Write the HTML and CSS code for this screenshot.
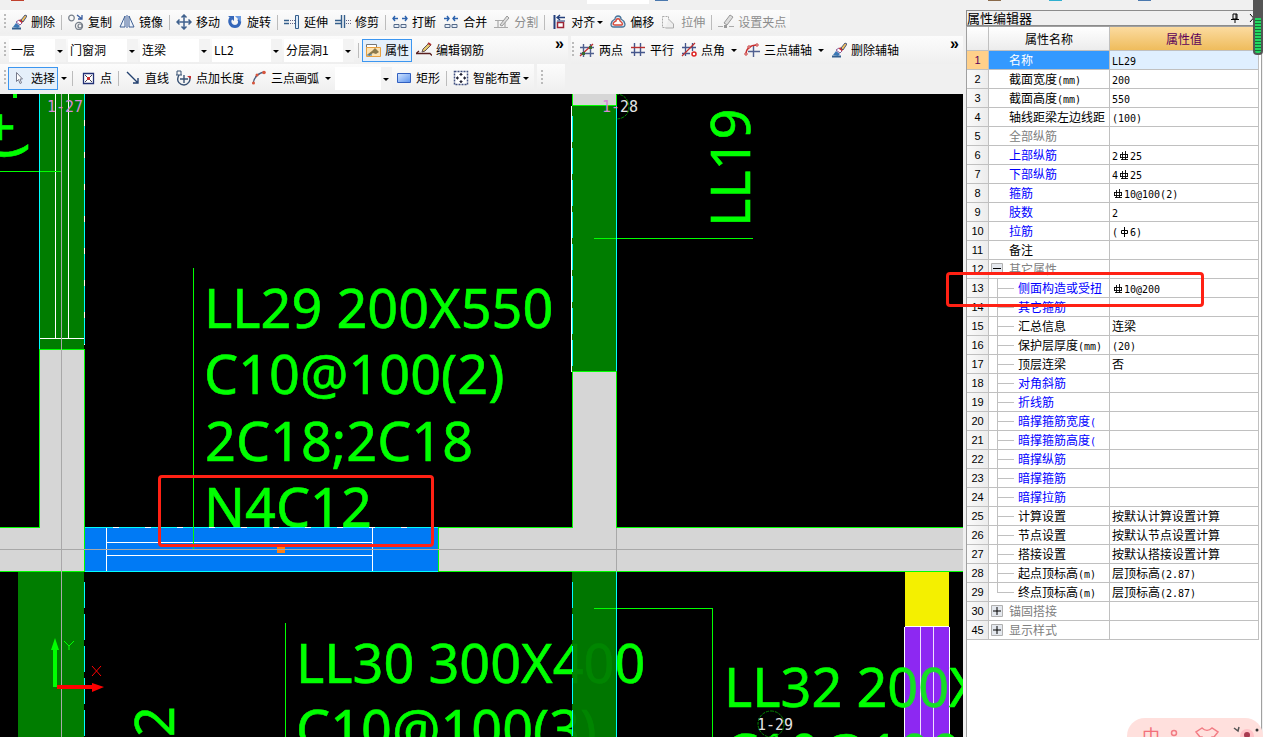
FILE: index.html
```html
<!DOCTYPE html>
<html lang="zh-CN">
<head>
<meta charset="utf-8">
<title>属性编辑器</title>
<link rel="stylesheet" href="styles.css">
</head>
<body>
<svg class="defs" width="0" height="0" aria-hidden="true">
  <defs>
    <linearGradient id="blueFill" x1="0" y1="0" x2="1" y2="1"><stop offset="0" stop-color="#d4e6ff"/><stop offset="1" stop-color="#5a92ee"/></linearGradient>
    <symbol id="brush" viewBox="0 0 16 16"><path d="M1 14.500h9" stroke="#335f8f" stroke-width="2"/><path d="M2 13l3-4 4 3-2 2z" fill="#3b78b5"/><path d="M5 8l4 3 2-2-3-3z" fill="#fff" stroke="#8a5a9a"/><path d="M8 7l3 2 1-1-3-3z" fill="#d03030"/><path d="M10 6l4-5 2 1-4 6z" fill="#f0c060" stroke="#26396c" stroke-width=".8"/></symbol>
    <symbol id="copy" viewBox="0 0 16 16"><g fill="none" stroke="#777f8a" stroke-width="1.200"><circle cx="3.500" cy="4" r="2.800"/><circle cx="11" cy="12" r="3.600"/><circle cx="12" cy="12" r="2"/></g><path d="M9 1l5 4m0-4v4h-4" fill="none" stroke="#3a5ea0" stroke-width="1.300"/></symbol>
    <symbol id="mirror" viewBox="0 0 16 16"><path d="M6 2v11H1zM10 2v11h5z" fill="#eef4fc" stroke="#3e5f93"/><path d="M8 1v13" stroke="#3a5ea0"/></symbol>
    <symbol id="move" viewBox="0 0 16 16"><path d="M8 1v14M1 8h14M5.500 3.500L8 1l2.500 2.500M5.500 12.500L8 15l2.500-2.500M3.500 5.500L1 8l2.500 2.500M12.500 5.500L15 8l-2.500 2.500" fill="none" stroke="#41628e" stroke-width="1.500"/></symbol>
    <symbol id="rotate" viewBox="0 0 16 16"><path d="M4 4C1 8 4 12.500 8 12.500S14 8 11.500 5" fill="none" stroke="#3567ba" stroke-width="3"/><path d="M8 2h6v6z" fill="#6a9ae0"/><path d="M1 2h6v5z" fill="#3567ba"/></symbol>
    <symbol id="extend" viewBox="0 0 16 16"><path d="M0 6.500h5M0 9.500h5" stroke="#355f8c" stroke-width="1.500"/><path d="M6 6.500h5M6 9.500h5" stroke="#668" stroke-dasharray="1 1"/><path d="M11.500 1.500h3v13h-3z" fill="#dceafa" stroke="#355f8c"/></symbol>
    <symbol id="trim" viewBox="0 0 16 16"><path d="M0 6.500h6M0 9.500h6" stroke="#355f8c" stroke-width="1.300"/><path d="M11 6.500h5M11 9.500h5" stroke="#668" stroke-dasharray="1 1"/><path d="M6.500 1v13M9.500 1v13" stroke="#355f8c" stroke-width="1.400"/></symbol>
    <symbol id="break" viewBox="0 0 16 16"><path d="M1 4.500h5M3 2L1 4.500 3 7M10 4.500h5M13 2l2 2.500L13 7" fill="none" stroke="#2b62ad" stroke-width="1.400"/><path d="M2 10.500h5v3H2zM9 10.500h5v3H9z" fill="#e5edf8" stroke="#536887"/></symbol>
    <symbol id="join" viewBox="0 0 16 16"><path d="M1 4.500h5M4 2l2 2.500L4 7M10 4.500h5M12 2l-2 2.500L12 7" fill="none" stroke="#2b62ad" stroke-width="1.400"/><path d="M2 10.500h5v3H2zM9 10.500h5v3H9z" fill="#e5edf8" stroke="#536887"/></symbol>
    <symbol id="split" viewBox="0 0 16 16"><path d="M1 6.500h8M0 13.500h14M4 13V6M11 13V8" stroke="#aaa" fill="none" stroke-width="1.200"/><path d="M6 11l7-9 2 2-7 8z" fill="#ddd" stroke="#999"/></symbol>
    <symbol id="align" viewBox="0 0 16 16"><path d="M3.500 1v14" stroke="#24407c" stroke-width="2"/><path d="M6.500 8.500h6v5h-6z" fill="#fff" stroke="#9e2838" stroke-width="1.500"/><path d="M6 7h8" stroke="#24407c"/><path d="M6 3.500h8M9 1L6 3.500 9 6" fill="none" stroke="#24407c" stroke-width="1.300"/></symbol>
    <symbol id="offset" viewBox="0 0 16 16"><path d="M5 5c0-4 6-4 6 0 4 2 6 8 1 8H4C-1 13 1 7 5 5z" fill="#d8e8f4" stroke="#48749a" stroke-width="1.300"/><path d="M6 7c0-3 4-3 4 0 3 2 3 4 1 4H5c-3 0-2-3 1-4z" fill="#fff" stroke="#d84a3a" stroke-width="1.400"/></symbol>
    <symbol id="stretch" viewBox="0 0 16 16"><path d="M1.500 2.500h6v11h-6z" fill="none" stroke="#aaa" stroke-dasharray="2 1"/><path d="M7.500 5l5 5v4h-8" fill="#eee" stroke="#aaa"/></symbol>
    <symbol id="grip-edit" viewBox="0 0 16 16"><path d="M0 12.500h5M11 12.500h5" stroke="#aaa"/><path d="M6 9l6-8 3 2-6 8z" fill="#ddd" stroke="#999"/><path d="M6 11h3v3H6z" fill="#999"/></symbol>
    <symbol id="props" viewBox="0 0 16 16"><path d="M1.500 2.500h10v3h-10z" fill="#fff" stroke="#777"/><path d="M1.500 5.500h14v9h-14z" fill="#fde2b0" stroke="#e8a040"/><path d="M3 12l4-3 3-3 4 4-3 2-3-1-4 3z" fill="#8c7a4c"/><path d="M2 13h5" stroke="#3578b8"/></symbol>
    <symbol id="rebar" viewBox="0 0 16 16"><path d="M3 9L0 11.500h14l2 2" stroke="#5a2020" stroke-width="1.300" fill="none"/><path d="M6 10l1-3 6-6 2 2-6 6z" fill="#e3c86e" stroke="#655"/><path d="M12 1l3 2" stroke="#b03030" stroke-width="2"/></symbol>
    <symbol id="axis2" viewBox="0 0 16 16"><path d="M4.500 2v13M11.500 2v13M1 5.500h14M1 11.500h14" stroke="#506090" stroke-width="1.400"/><path d="M1 14L14 2" stroke="#c03030" stroke-width="1.300"/><path d="M3 10h3v3H3zM10 4h3v3h-3z" fill="#3a6a30"/></symbol>
    <symbol id="parallel" viewBox="0 0 16 16"><path d="M4.500 1v13M10.500 1v13M1 10.500h14" stroke="#45568c" stroke-width="1.400"/><path d="M1 5.500h14" stroke="#b83030" stroke-width="1.400"/></symbol>
    <symbol id="angle" viewBox="0 0 16 16"><path d="M4.500 1v13M11.500 1v8M1 5.500h14M1 11.500h8" stroke="#45568c" stroke-width="1.300"/><path d="M1 14L14 1" stroke="#c03030" stroke-width="1.300"/><circle cx="13" cy="12" r="2" fill="#fff" stroke="#d22" stroke-width="1.500"/></symbol>
    <symbol id="arcaxis" viewBox="0 0 16 16"><path d="M9.500 3v12M4 9.500h12" stroke="#506090" stroke-width="1.400"/><path d="M2 12C2 7 6 3 13 3" fill="none" stroke="#c83030" stroke-width="1.400"/><g fill="#fff" stroke="#c83030"><circle cx="2" cy="12" r="1.200"/><circle cx="5" cy="5" r="1.200"/><circle cx="13" cy="3" r="1.200"/></g></symbol>
    <symbol id="cursor" viewBox="0 0 16 16"><path d="M5.500 2.500v9l2-2 1.500 4 1.500-.700-1.500-3.800h2.500z" fill="#fff" stroke="#777b8c"/></symbol>
    <symbol id="point" viewBox="0 0 16 16"><path d="M3.500 3.500h10v10h-10z" fill="#fff" stroke="#223075" stroke-width="1.300"/><path d="M5 5l7 7M12 5l-7 7" stroke="#445"/><path d="M7 7h3v3H7z" fill="#c33"/></symbol>
    <symbol id="line" viewBox="0 0 16 16"><path d="M2 2l11 11M13 8v5H8" fill="none" stroke="#23406f" stroke-width="1.400"/></symbol>
    <symbol id="ptlen" viewBox="0 0 16 16"><path d="M3 5C-1 12 5 15 8 15s8-4 5-9M8 5v8M4 9h8" fill="none" stroke="#395274" stroke-width="1.400"/><path d="M1 5V1h4v4M0 5h6" fill="none" stroke="#395274"/><path d="M11 6h4v3z" fill="#c83030"/></symbol>
    <symbol id="arc" viewBox="0 0 16 16"><path d="M2 14C3 7 7 3 14 2" fill="none" stroke="#506080" stroke-width="1.500"/><g fill="#d8553c"><circle cx="2.500" cy="13" r="1.500"/><circle cx="6" cy="5" r="1.500"/><circle cx="13" cy="2.500" r="1.800"/></g></symbol>
    <symbol id="rect" viewBox="0 0 16 16"><path d="M1.500 3.500h13v9h-13z" fill="url(#blueFill)" stroke="#315fc0"/></symbol>
    <symbol id="smart" viewBox="0 0 16 16"><path d="M1.500 1.500h13v13h-13z" fill="#fff" stroke="#405080" stroke-dasharray="2 1" stroke-width="1.500"/><path d="M8 3v10M3 8h10" stroke="#223" stroke-dasharray="3 4"/><path d="M6 5l2-2 2 2zM6 11l2 2 2-2zM5 6L3 8l2 2zM11 6l2 2-2 2z" fill="#223"/></symbol>
    <symbol id="rebar3" viewBox="0 0 12 10"><path d="M4.500 1v8M7.500 0v9M2 3.500h8M2 6.500h8M3 8.500h7M2.500 3v4M9.500 3v4" fill="none" stroke="currentColor" stroke-width=".9"/></symbol>
    <symbol id="rebar1" viewBox="0 0 12 10"><path d="M6.500 0v10M3.500 3.500h6v3h-6z" fill="none" stroke="currentColor"/></symbol>
    <symbol id="plus" viewBox="0 0 12 12"><path d="M.5.5h11v11H.5z" fill="#e4e8ee" stroke="#b0b0b0"/><path d="M2 6h8M6 2v8" stroke="#000"/></symbol>
    <symbol id="minus" viewBox="0 0 12 12"><path d="M.5.5h11v11H.5z" fill="#e4e8ee" stroke="#b0b0b0"/><path d="M2 5.500h8" stroke="#000"/></symbol>
  </defs>
</svg>

<div class="app">
  <div class="strip"><i class="bit red"></i><i class="bit box"></i><i class="bit blue"></i><i class="bit brown"></i><i class="bit cyan"></i><i class="bit blue"></i></div>
  <main class="work">
    <div class="bars">
      <div class="bar bar-edit" role="toolbar">
        <i class="grip"></i>
        <button><svg><use href="#brush"/></svg>删除</button><i class="sep"></i>
        <button><svg><use href="#copy"/></svg>复制</button>
        <button><svg><use href="#mirror"/></svg>镜像</button><i class="sep"></i>
        <button><svg><use href="#move"/></svg>移动</button>
        <button><svg><use href="#rotate"/></svg>旋转</button><i class="sep"></i>
        <button><svg><use href="#extend"/></svg>延伸</button>
        <button><svg><use href="#trim"/></svg>修剪</button><i class="sep"></i>
        <button><svg><use href="#break"/></svg>打断</button>
        <button><svg><use href="#join"/></svg>合并</button>
        <button disabled><svg><use href="#split"/></svg>分割</button><i class="sep"></i>
        <button><svg><use href="#align"/></svg>对齐<i class="caret tight"></i></button>
        <button><svg><use href="#offset"/></svg>偏移</button>
        <button disabled><svg><use href="#stretch"/></svg>拉伸</button><i class="sep"></i>
        <button disabled><svg><use href="#grip-edit"/></svg>设置夹点</button>
      </div>
      <div class="row">
        <div class="bar bar-member" role="toolbar">
          <i class="grip"></i>
          <div class="combos">
            <label class="combo short"><select aria-label="楼层"><option>一层</option></select></label>
            <label class="combo"><select aria-label="构件类别"><option>门窗洞</option></select></label>
            <label class="combo"><select aria-label="构件类型"><option>连梁</option></select></label>
            <label class="combo"><select aria-label="构件"><option>LL2</option></select></label>
            <label class="combo"><select aria-label="分层"><option>分层洞1</option></select></label>
          </div>
          <i class="sep"></i>
          <button class="on"><svg><use href="#props"/></svg>属性</button>
          <button><svg><use href="#rebar"/></svg>编辑钢筋</button>
          <span class="more">»</span>
        </div>
        <div class="bar bar-axis" role="toolbar">
          <i class="grip"></i>
          <button><svg><use href="#axis2"/></svg>两点</button>
          <button><svg><use href="#parallel"/></svg>平行</button>
          <button><svg><use href="#angle"/></svg>点角<i class="caret"></i></button>
          <button><svg><use href="#arcaxis"/></svg>三点辅轴<i class="caret"></i></button>
          <button><svg><use href="#brush"/></svg>删除辅轴</button>
          <span class="more">»</span>
        </div>
      </div>
      <div class="row">
        <div class="bar bar-draw" role="toolbar">
          <i class="grip"></i>
          <button class="on"><svg><use href="#cursor"/></svg>选择</button><i class="caret tight"></i><i class="sep wide"></i>
          <button><svg><use href="#point"/></svg>点</button><i class="sep"></i>
          <button><svg><use href="#line"/></svg>直线</button>
          <button><svg><use href="#ptlen"/></svg>点加长度</button>
          <button><svg><use href="#arc"/></svg>三点画弧<i class="caret"></i></button>
          <label class="combo short"><select aria-label="画弧参数"><option></option></select></label>
          <button><svg><use href="#rect"/></svg>矩形</button><i class="sep"></i>
          <button><svg><use href="#smart"/></svg>智能布置<i class="caret tight"></i></button>
        </div>
        <div class="bar bar-empty"><i class="grip"></i></div>
      </div>
    </div>
    <svg class="canvas" role="img" aria-label="平面图">
      <g transform="translate(0 -94)" shape-rendering="crispEdges">
        <g class="wall">
          <path d="M39 350h45v178h354v-1h134V371h44v156h348v44H0v-44h39z"/>
          <path d="M572 90h44v15h-44z"/>
        </g>
        <g class="beam">
          <path d="M39 90h45v259H39zM572 106h44v265h-44zM18 572h66v170H18z"/>
        </g>
        <g class="cad-text" shape-rendering="auto">
          <text x="204" y="328">LL29 200X550</text>
          <text x="204" y="394">C10@100(2)</text>
          <text x="205" y="461">2C18;2C18</text>
          <text x="204" y="527">N4C12</text>
          <text x="296" y="683">LL30 300X400</text>
          <text x="296" y="749">C10@100(3)</text>
          <text transform="translate(750 227) rotate(-90)">LL19</text>
          <text transform="translate(174 737) rotate(-90)">2</text>
          <text transform="translate(19 159) rotate(-90)">(+</text>
        </g>
        <path class="lime" d="M13 90h4v8h-4z"/>
        <path class="beam veil" d="M572 572h44v170h-44z"/>
        <path class="sel" d="M85 528h353v43H85z"/>
        <path class="yellow" d="M905 572h44v55h-44z"/>
        <path class="purple" d="M905 627h44v120h-44z"/>
        <path class="w" d="M904.500 742V627M949.500 627v115M920.500 627v115M933.500 627v115M905 626.500h44M55.500 94v244M68.500 94v244M40 338.500h44M106.500 528v43M372.500 528v43M107 542.500h265M107 555.500h265M571.500 106v266"/>
        <g class="cad-text" shape-rendering="auto"><text x="724" y="707">LL32 200X</text><text x="724" y="773">C10@100(2)</text></g>
        <path class="purple tint" d="M905 627h44v120h-44z"/>
        <path class="g" d="M0 527.500h39.500V349.500h45V571.500M0 571.500h84M438.500 527v44M438 527.500h134.500V371.500h44V527.500h348M438 571.500h526M572.500 90v15.500h44V90M0 171.500h61M594 238.500h159M594 608.500h118.500V742M285.500 623v120"/>
        <path class="c" d="M39.500 94v255M616.500 106v265M85 527.500h353M85 571.500h353M616.500 572v170M84.500 94v250"/>
        <path class="c dash" d="M572.500 116v255M84.500 582v160M572.500 582v160"/>
        <path class="w mark" d="M84.500 120v225M113 527.500h300"/>
        <path class="a" d="M61.500 94v648M0 549.500h964M616.500 528v44"/>
        <path class="g" d="M193.500 268v281"/>
        <path class="orange" d="M277 547h8v6h-8z"/>
        <path class="a" d="M277 549.500h8"/>
        <g class="label" shape-rendering="auto">
          <text class="pink" x="47" y="112">1-27</text>
          <text x="602" y="112"><tspan class="pink">1-</tspan>28</text>
          <text x="757" y="730">1-29</text>
          <path d="M616 94c8 0 13 6 13 13s-5 12-13 12M771 711a13 13 0 0 1 0 26a13 13 0 0 1 0-26"/>
        </g>
        <g shape-rendering="auto">
          <path class="lime" d="M53 687v-37h-2l4-12 4 12h-2v37z"/>
          <path class="tip" d="M57 685h35v-2l12 4-12 5v-3H57z"/>
          <path class="g" d="M64 641l5 5 5-5M69 646v4"/>
          <path class="xmark" d="M92 666l9 10M101 666l-9 10"/>
        </g>
      </g>
    </svg>
  </main>

  <aside class="panel">
    <header class="title"><h1>属性编辑器</h1><button aria-label="固定"><svg viewBox="0 0 10 10"><path d="M3 1h4v5H3zM6 1v5M1 6.500h8M5 7v3" fill="none" stroke="#000"/></svg></button><button aria-label="关闭"><svg viewBox="0 0 10 10"><path d="M2 1l7 8M9 1L2 9" stroke="#000"/></svg></button></header>
    <div class="sheet">
    <table>
      <thead><tr><th class="no"></th><th class="name">属性名称</th><th class="val">属性值</th></tr></thead>
      <tbody>
        <tr class="cur"><th>1</th><td>名称</td><td><b>LL29</b></td></tr>
        <tr><th>2</th><td>截面宽度<b>(mm)</b></td><td><b>200</b></td></tr>
        <tr><th>3</th><td>截面高度<b>(mm)</b></td><td><b>550</b></td></tr>
        <tr><th>4</th><td>轴线距梁左边线距</td><td><b>(100)</b></td></tr>
        <tr class="off"><th>5</th><td>全部纵筋</td><td></td></tr>
        <tr class="link"><th>6</th><td>上部纵筋</td><td><b>2<svg><use href="#rebar3"/></svg>25</b></td></tr>
        <tr class="link"><th>7</th><td>下部纵筋</td><td><b>4<svg><use href="#rebar3"/></svg>25</b></td></tr>
        <tr class="link"><th>8</th><td>箍筋</td><td><b><svg><use href="#rebar3"/></svg>10@100(2)</b></td></tr>
        <tr class="link"><th>9</th><td>肢数</td><td><b>2</b></td></tr>
        <tr class="link"><th>10</th><td>拉筋</td><td><b>(<svg><use href="#rebar1"/></svg>6)</b></td></tr>
        <tr><th>11</th><td>备注</td><td></td></tr>
        <tr class="off group"><th>12</th><td><button class="fold" aria-label="折叠"><svg><use href="#minus"/></svg></button>其它属性</td><td></td></tr>
        <tr class="link sub"><th>13</th><td>侧面构造或受扭</td><td><b><svg><use href="#rebar3"/></svg>10@200</b></td></tr>
        <tr class="link sub"><th>14</th><td>其它箍筋</td><td></td></tr>
        <tr class="sub"><th>15</th><td>汇总信息</td><td>连梁</td></tr>
        <tr class="sub"><th>16</th><td>保护层厚度<b>(mm)</b></td><td><b>(20)</b></td></tr>
        <tr class="sub"><th>17</th><td>顶层连梁</td><td>否</td></tr>
        <tr class="link sub"><th>18</th><td>对角斜筋</td><td></td></tr>
        <tr class="link sub"><th>19</th><td>折线筋</td><td></td></tr>
        <tr class="link sub"><th>20</th><td>暗撑箍筋宽度<b>(</b></td><td></td></tr>
        <tr class="link sub"><th>21</th><td>暗撑箍筋高度<b>(</b></td><td></td></tr>
        <tr class="link sub"><th>22</th><td>暗撑纵筋</td><td></td></tr>
        <tr class="link sub"><th>23</th><td>暗撑箍筋</td><td></td></tr>
        <tr class="link sub"><th>24</th><td>暗撑拉筋</td><td></td></tr>
        <tr class="sub"><th>25</th><td>计算设置</td><td>按默认计算设置计算</td></tr>
        <tr class="sub"><th>26</th><td>节点设置</td><td>按默认节点设置计算</td></tr>
        <tr class="sub"><th>27</th><td>搭接设置</td><td>按默认搭接设置计算</td></tr>
        <tr class="sub"><th>28</th><td>起点顶标高<b>(m)</b></td><td>层顶标高<b>(2.87)</b></td></tr>
        <tr class="sub last"><th>29</th><td>终点顶标高<b>(m)</b></td><td>层顶标高<b>(2.87)</b></td></tr>
        <tr class="off group"><th>30</th><td><button class="fold" aria-label="展开"><svg><use href="#plus"/></svg></button>锚固搭接</td><td></td></tr>
        <tr class="off group"><th>45</th><td><button class="fold" aria-label="展开"><svg><use href="#plus"/></svg></button>显示样式</td><td></td></tr>
      </tbody>
    </table>
    </div>
  </aside>
</div>

<div class="callout callout-text"></div>
<div class="callout callout-row"></div>
<div class="meter"></div>
<div class="ime"><span>中</span><svg viewBox="0 0 120 30" fill="none" stroke="#f27c84" stroke-width="1.500"><circle cx="14" cy="15" r="2.500"/><path d="M42 10l-6 4 4 5h2v12h10V19h2l4-5-6-4c-3 3-7 3-10 0z"/><path d="M74 10l4 3 1-4" stroke="#555"/><circle cx="87" cy="18" r="7" fill="#ffc3c8" stroke="none"/><circle cx="87" cy="17" r="3" fill="#a83a50" stroke="none"/><circle cx="97" cy="12" r="1.500" fill="#333" stroke="none"/></svg></div>
</body>
</html>
```
FILE: styles.css
```css
* { box-sizing: border-box; }
body {
  margin: 0;
  height: 100vh;
  overflow: hidden;
  background: #f0f0f0;
  color: #000;
  font: 12px/16px "Noto Sans CJK SC", sans-serif;
}
.defs { position: absolute; }
button, select { font: inherit; color: inherit; border: 0; background: none; padding: 0; margin: 0; }

.app {
  display: grid;
  grid-template: 10px minmax(0, 1fr) / minmax(0, 1fr) 297px;
  column-gap: 3px;
  height: 100vh;
}
.strip { grid-column: 1 / 3; display: flex; padding-left: 11px; }
.bit { width: 13px; height: 1px; }
.bit.red { background: #c0402c; margin-right: 563px; }
.bit.box { width: 62px; height: 4px; background: #fff; margin-right: 6px; }
.bit.blue { background: #4a78ae; }
.bit.brown { background: #8a6a4a; margin-left: 320px; }
.bit.cyan { background: #30b0d0; margin: 0 76px 0 48px; }

.work { display: flex; flex-direction: column; min-height: 0; }
.bars { height: 84px; display: flex; flex-direction: column; align-items: flex-start; flex: none; }
.row { display: flex; width: 100%; gap: 3px; }
.bar {
  display: flex;
  align-items: center;
  gap: 1px;
  height: 28px;
  padding-left: 4px;
  background: linear-gradient(#fcfcfc, #efefef);
  white-space: nowrap;
}
.bar-edit { height: 24px; margin-bottom: 2px; padding-right: 1px; }
.bar-member { width: 568px; }
.bar-axis { flex: 1; padding-left: 1px; }
.bar-draw { width: 534px; }
.bar-empty { width: 28px; }
.grip {
  width: 2px;
  height: 16px;
  margin-right: 1px;
  background: repeating-linear-gradient(#bbb 0 2px, transparent 2px 4px);
  flex: none;
}
.sep { width: 1px; height: 15px; margin: 0 2px; background: #bcbcbc; }
.sep.wide { margin: 0 3px 0 4px; }
.bar button { display: flex; align-items: center; gap: 4px; height: 23px; padding: 0 3px; }
.bar button svg { width: 16px; height: 16px; flex: none; }
.bar button:disabled { color: #8d8d8d; }
.bar button.on { background: #e5effa; outline: 1px solid #3c96f0; outline-offset: -1px; }
.caret { border: 3px solid transparent; border-top-color: #000; border-bottom: 0; margin: 1px 0 0 2px; }
.caret.tight { margin-left: -2px; }
.bar-draw > .caret.tight { margin-left: 2px; }
.more { margin: -12px 4px 0 auto; font: bold 16px/16px "Liberation Sans", sans-serif; }
.combos { display: flex; gap: 2px; margin: 0 1px; }
.combo { position: relative; display: flex; width: 70px; height: 23px; background: #fff; }
.combo.short { width: 57px; }
.combo select { appearance: none; width: 100%; padding-left: 2px; outline: 0; }
.combo::before { content: ""; position: absolute; inset: 0 0 0 auto; width: 11px; background: #f3f3f3; pointer-events: none; }
.combo::after { content: ""; position: absolute; right: 3px; top: 11px; border: 3px solid transparent; border-top-color: #000; border-bottom: 0; pointer-events: none; }

.canvas { flex: 1; min-height: 0; width: 100%; background: #000; overflow: hidden; }
.wall { fill: #d6d6d6; }
.beam { fill: #007d00; }
.veil { fill-opacity: .94; }
.sel { fill: #007af5; }
.yellow { fill: #f4f000; }
.purple { fill: #8d28f2; }
.tint { fill-opacity: .15; }
.orange { fill: #ff8010; }
.lime { fill: #0f0; }
.tip { fill: #f00; }
.xmark { stroke: #f00; }
.g, .c, .w, .a { fill: none; stroke-width: 1; }
.g { stroke: #0f0; }
.c { stroke: #0ff; }
.w { stroke: #fff; }
.a { stroke: #a8a8a8; }
.dash { stroke-dasharray: 26 6; }
.mark { stroke-dasharray: 6 26; }
.cad-text { fill: #0f0; stroke: #0f0; stroke-width: .6; font: 54px "Noto Sans", sans-serif; }
.label { fill: #e4e4e4; font: 15px "DejaVu Sans Mono", monospace; }
.label .pink { fill: #d68ad6; }
.label path { fill: none; stroke: #008a00; stroke-dasharray: 3 1; }

.panel { display: flex; flex-direction: column; padding-right: 1px; min-height: 0; }
.title { display: flex; align-items: center; height: 16px; border: 1px solid #8c8c8c; border-right: 0; }
.title h1 { flex: 1; margin: 0; font-size: 13px; font-weight: 400; line-height: 12px; }
.title button { width: 18px; height: 12px; }
.title svg { display: block; width: 10px; height: 10px; margin: auto; }
.sheet { flex: 1; background: #fff; border: 1px solid #a0a0a0; border-bottom: 0; padding-right: 2px; }
table { width: 100%; table-layout: fixed; border-collapse: separate; border-spacing: 0; }
th, td {
  height: 19px;
  padding: 0 0 0 2px;
  border: solid #c0c0c0;
  border-width: 0 1px 1px 0;
  line-height: 16px;
  font-weight: 400;
  text-align: left;
  white-space: nowrap;
  overflow: hidden;
}
thead th { height: 24px; padding: 0; text-align: center; background: linear-gradient(#fff, #ececec); }
thead .no { width: 22px; }
thead .name { width: 121px; }
thead .val { color: #5a005a; background: linear-gradient(#fbdba0, #efbc5c); }
tbody th { padding: 0; text-align: center; background: linear-gradient(90deg, #fafafa, #ececec); font: 11px/16px "Liberation Sans", sans-serif; }
tbody td:nth-child(2) { padding-left: 20px; }
td b { font: 10px/12px "DejaVu Sans Mono", monospace; }
td svg { width: 12px; height: 10px; vertical-align: -1px; }
.link td:nth-child(2) { color: #00f; }
.off td { color: #808080; }
.cur th { background: #ffd08a; color: #5a005a; }
.cur td { background: #dfefff; }
.cur td:nth-child(2) { background: #3399ff; color: #fff; }
.sub td:nth-child(2) {
  padding-left: 29px;
  background:
    linear-gradient(#c0c0c0, #c0c0c0) 8px 0 / 1px 100% no-repeat,
    linear-gradient(#c0c0c0, #c0c0c0) 8px 9px / 17px 1px no-repeat;
}
.sub.last td:nth-child(2) { background-size: 1px 10px, 17px 1px; }
.group td:nth-child(2) { padding-left: 2px; }
.fold { height: 12px; margin-right: 6px; vertical-align: -1px; }
.fold svg { display: block; width: 12px; height: 12px; }

.callout { position: absolute; border: 3px solid #ff2114; border-radius: 4px; }
.callout-text { left: 158px; top: 475px; width: 276px; height: 72px; }
.callout-row { left: 946px; top: 272px; width: 258px; height: 35px; }
.meter {
  position: absolute;
  right: 0;
  top: 0;
  width: 10px;
  height: 55px;
  border: 2px solid #555;
  border-top: 0;
  border-radius: 0 0 4px 4px;
  background: linear-gradient(#555 0 18px, transparent 18px), repeating-linear-gradient(#22d860 0 2px, #167038 2px 3px);
}
.ime {
  position: absolute;
  right: 0;
  bottom: 0;
  display: flex;
  width: 136px;
  height: 19px;
  padding-left: 15px;
  overflow: hidden;
  border-radius: 18px 18px 0 0;
  background: #ffe0dd;
  color: #f2707a;
  font-size: 18px;
  line-height: 34px;
}
.ime svg { width: 120px; height: 30px; flex: none; }
```
